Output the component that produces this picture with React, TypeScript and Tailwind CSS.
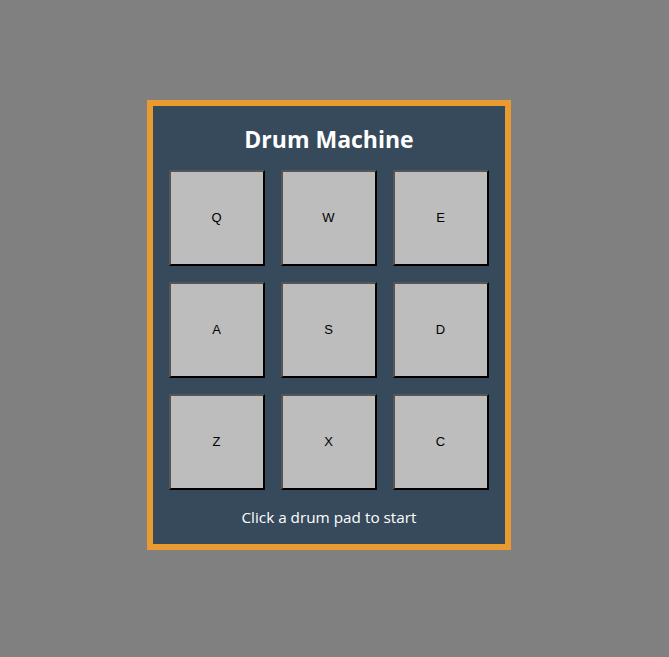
const pads = ['Q', 'W', 'E', 'A', 'S', 'D', 'Z', 'X', 'C'];

export default function App() {
  return (
    <div className="min-h-[657px] bg-[#808080] pl-[147px] pt-[100px]">
      <div
        id="drum-machine"
        className="w-[364px] border-[6px] border-[#e99b30] bg-[#364a5c] px-[16px] pb-[17px]"
        style={{ fontFamily: '"Open Sans", "Noto Sans", sans-serif' }}
      >
        <h1 className="flex h-[64px] items-center justify-center pt-[2px] text-[23px] font-bold text-white">
          Drum Machine
        </h1>
        <div className="grid grid-cols-3 gap-[16px]">
          {pads.map((key) => (
            <button
              key={key}
              className="flex h-[96px] w-[96px] items-center justify-center border-2 border-t-[#555555] border-l-[#555555] border-r-black border-b-black bg-[#bdbdbd] pr-[1px] text-[13px] text-black"
              style={{ fontFamily: '"Liberation Sans", Arial, sans-serif' }}
            >
              {key}
            </button>
          ))}
        </div>
        <p className="mt-[17px] text-center text-[15.3px] leading-[20px] text-white">
          Click a drum pad to start
        </p>
      </div>
    </div>
  );
}
